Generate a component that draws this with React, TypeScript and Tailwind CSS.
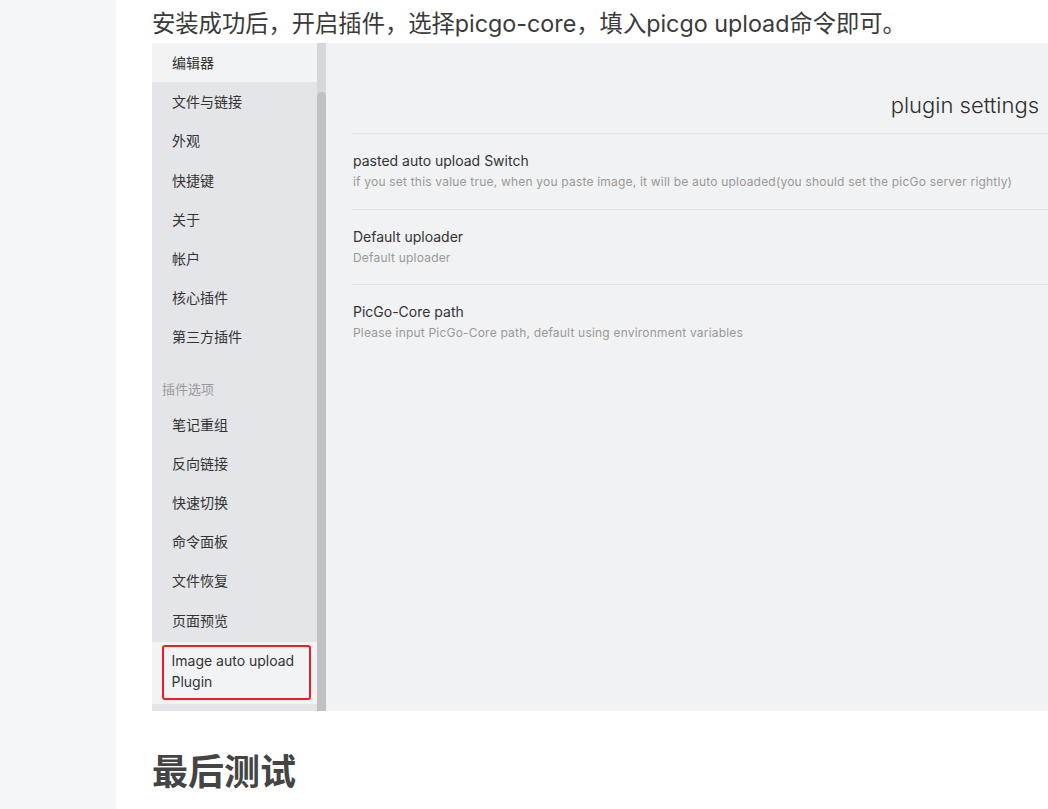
const CORE = ['文件与链接', '外观', '快捷键', '关于', '帐户', '核心插件', '第三方插件']
const PLUGINS = ['笔记重组', '反向链接', '快速切换', '命令面板', '文件恢复', '页面预览']

const SETTINGS = [
  {
    name: 'pasted auto upload Switch',
    desc: 'if you set this value true, when you paste image, it will be auto uploaded(you should set the picGo server rightly)',
  },
  { name: 'Default uploader', desc: 'Default uploader' },
  { name: 'PicGo-Core path', desc: 'Please input PicGo-Core path, default using environment variables' },
]

function NavItem({ label }: { label: string }) {
  return (
    <div className="flex h-[39.2px] items-center pl-[20px] text-[14px] text-[#333]">{label}</div>
  )
}

function Sidebar() {
  return (
    <div className="flex w-[174px] shrink-0 bg-[#e4e5e9]">
      <div className="flex w-[165px] flex-col">
        <div className="bg-[#f2f3f5]">
          <NavItem label="编辑器" />
        </div>
        {CORE.map((c) => (
          <NavItem key={c} label={c} />
        ))}
        <div className="flex h-[48px] items-center pl-[10px] pt-[18px] text-[13px] text-[#9a9a9a]">
          插件选项
        </div>
        {PLUGINS.map((p) => (
          <NavItem key={p} label={p} />
        ))}
        <div className="mt-[2px] bg-[#f2f3f5] pl-[10px] pr-[6px] pt-[3px] pb-[4px]">
          <div className="rounded-[3px] border-[2.5px] border-[#ee1c25] px-[7.5px] pt-[3px] pb-[6px] text-[14px] leading-[21px] text-[#333]">
            Image auto upload
            <br />
            Plugin
          </div>
        </div>
      </div>
      <div className="flex w-[9px] flex-col bg-[#d6d7db]">
        <div className="mt-[49px] flex-1 rounded-t-full bg-[#c1c1c1]" />
      </div>
    </div>
  )
}

function SettingsPanel() {
  return (
    <div className="flex-1 bg-[#f1f2f4] pl-[26px]">
      <div className="flex h-[90px] items-end justify-end pr-[9px] pb-[11px] text-[22px] font-light text-[#2e2e2e]">
        plugin settings
      </div>
      {SETTINGS.map((s) => (
        <div key={s.name} className="border-t border-[#e2e3e6] pt-[17px] pb-[16.5px] pl-[1px]">
          <div className="text-[14px] leading-[20px] text-[#333]">{s.name}</div>
          <div className="mt-[1px] text-[12px] leading-[20px] tracking-[0.2px] text-[#999]">{s.desc}</div>
        </div>
      ))}
    </div>
  )
}

export default function App() {
  return (
    <div
      className="flex h-[809px] w-[1048px] overflow-hidden bg-white"
      style={{ fontFamily: 'Inter, "Noto Sans CJK SC", sans-serif' }}
    >
      <div className="w-[116px] shrink-0 bg-[#f5f6f7]" />
      <div className="flex flex-1 flex-col pl-[36px]">
        <p className="pt-[8px] text-[23.3px] leading-[32px] text-[#3a3a3a]">
          安装成功后，开启插件，选择picgo-core，填入picgo upload命令即可。
        </p>
        <div className="mt-[3px] flex h-[668px]">
          <Sidebar />
          <SettingsPanel />
        </div>
        <h2 className="mt-[39px] text-[36px] font-bold leading-[44px] text-[#444]">最后测试</h2>
      </div>
    </div>
  )
}
